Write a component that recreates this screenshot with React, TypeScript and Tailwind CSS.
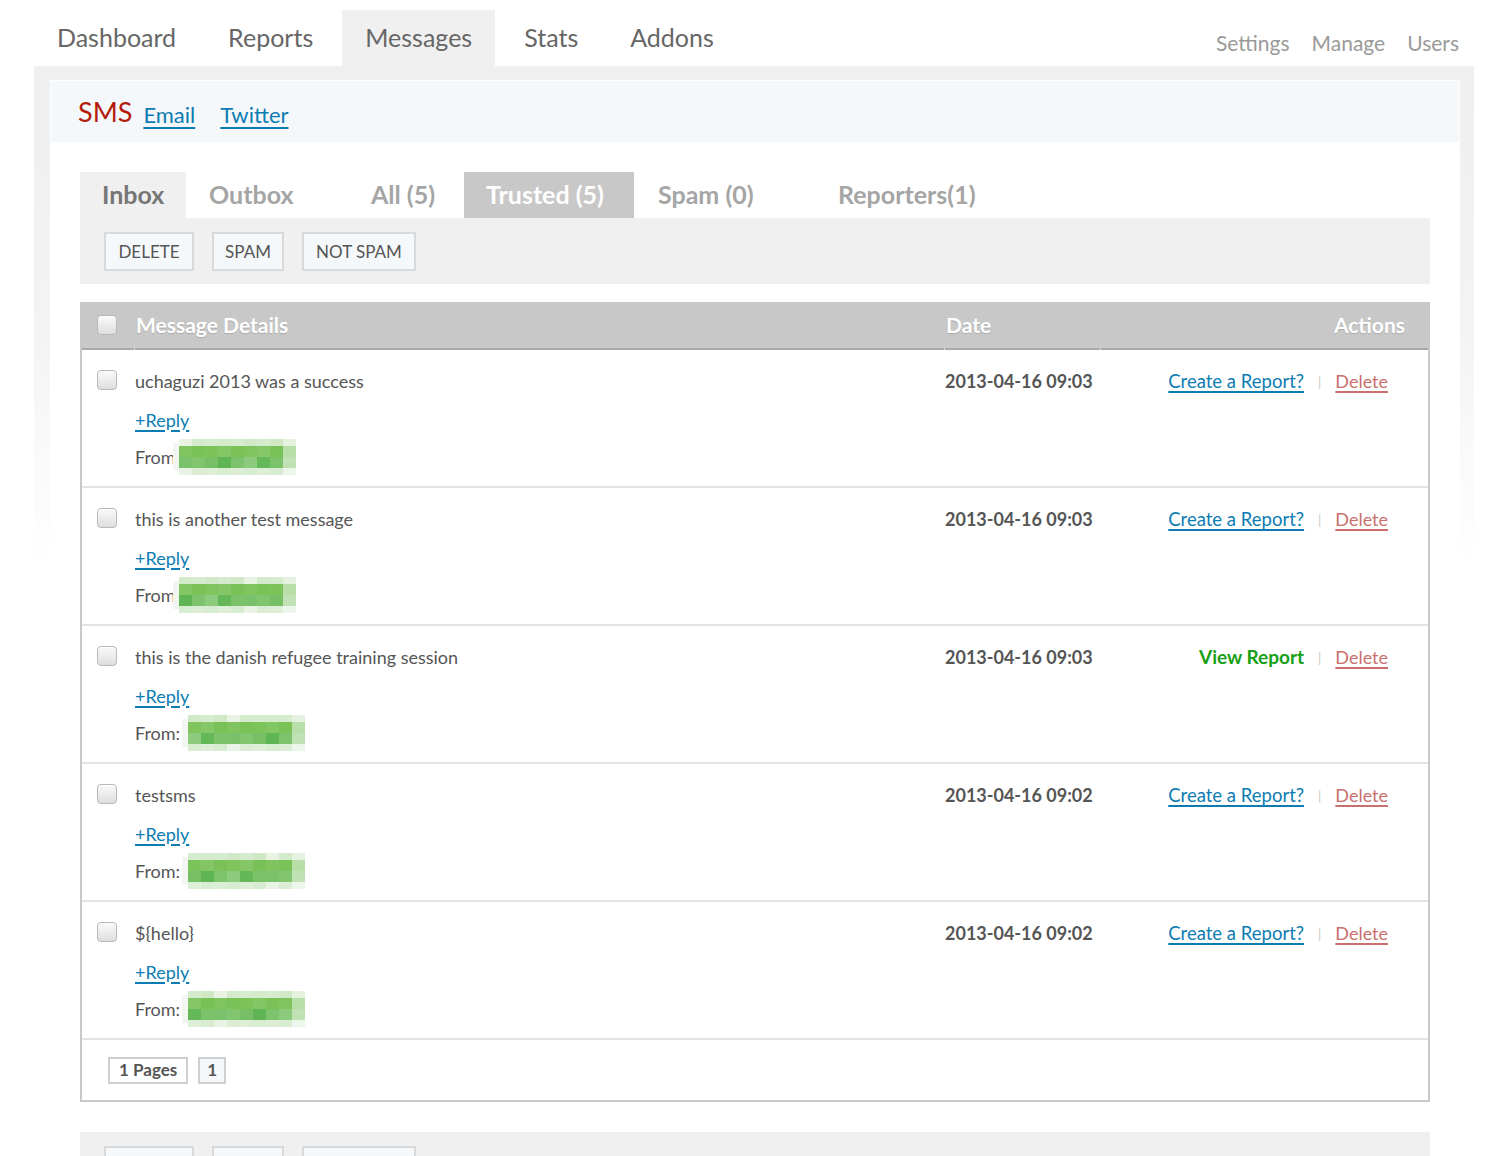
import React from "react";

const F = { fontFamily: "Lato, 'Open Sans', sans-serif" } as React.CSSProperties;

function Checkbox() {
  return (
    <div className="w-[20px] h-[20px] rounded-[4px] border border-[#b8b8b8] bg-[linear-gradient(to_bottom,#fafafa,#dedede)] shadow-[inset_0_1px_0_#fff]" />
  );
}

const greens = [
  ["#e9f3e4", "#d4ebcb", "#d6ecce", "#d3eacb", "#d6ecce", "#d2e9c9", "#d5ebcd", "#d0e8c6", "#e5f2df"],
  ["#7fc45f", "#79c257", "#7cc35a", "#83c764", "#7ac258", "#7fc45d", "#85c766", "#78c156", "#b9dfa8"],
  ["#79c16a", "#81c56f", "#76bf65", "#5fb553", "#7dc36d", "#8ccb7d", "#64b857", "#7cc26b", "#c0e1b3"],
  ["#eaf4e6", "#dbeed5", "#deefd8", "#d9edd2", "#dcefd6", "#d8ecd1", "#ddefd7", "#d7ecd0", "#edf6ea"],
];

function Blur({ seed }: { seed: number }) {
  const cw = 13;
  const rh = [7, 11, 11, 7];
  let y = 0;
  const rects: React.ReactNode[] = [];
  greens.forEach((row, ri) => {
    row.forEach((c, ci) => {
      const alt = greens[ri][(ci + seed) % 8];
      rects.push(<rect key={ri + "-" + ci} x={6 + ci * cw} y={y} width={cw} height={rh[ri]} fill={ci === 8 ? c : alt} />);
    });
    y += rh[ri];
  });
  return (
    <svg width="130" height="36" viewBox="0 0 130 36" className="block">
      <rect x="0" y="4" width="6" height="28" fill="#f2f6f0" />
      {rects}
    </svg>
  );
}

type Msg = { text: string; date: string; view?: boolean; colon: boolean; seed: number };
const msgs: Msg[] = [
  { text: "uchaguzi 2013 was a success", date: "2013-04-16 09:03", colon: false, seed: 0 },
  { text: "this is another test message", date: "2013-04-16 09:03", colon: false, seed: 3 },
  { text: "this is the danish refugee training session", date: "2013-04-16 09:03", view: true, colon: true, seed: 5 },
  { text: "testsms", date: "2013-04-16 09:02", colon: true, seed: 2 },
  { text: "${hello}", date: "2013-04-16 09:02", colon: true, seed: 6 },
];

function Toolbar({ labels }: { labels: boolean }) {
  return (
    <div className="bg-[#f0f0f0] h-[66px] flex items-start pt-[14px] pl-[24px] gap-[18px]">
      {["DELETE", "SPAM", "NOT SPAM"].map((b, i) => (
        <div
          key={b}
          className={
            "h-[39px] flex items-center justify-center border-2 border-[#d9d9d9] bg-[#f5f8fa] text-[17px] text-[#555] " +
            (i === 0 ? "w-[90px]" : i === 1 ? "w-[72px]" : "w-[114px]")
          }
        >
          {labels ? b : null}
        </div>
      ))}
    </div>
  );
}

export default function App() {
  return (
    <div className="w-[1502px] h-[1156px] bg-white overflow-hidden" style={F}>
      {/* top nav */}
      <div className="flex items-end justify-between pl-[34px] pr-[43px] pt-[10px]">
        <div className="flex gap-[6px]">
          {["Dashboard", "Reports", "Messages", "Stats", "Addons"].map((t) => (
            <div
              key={t}
              className={
                "h-[56px] px-[23px] flex items-center text-[25px] text-[#666] " +
                (t === "Messages" ? "bg-[#f0f0f0]" : "")
              }
            >
              {t}
            </div>
          ))}
        </div>
        <div className="flex gap-[22px] text-[21px] text-[#9a9a9a] pb-[8px]">
          <span>Settings</span>
          <span>Manage</span>
          <span>Users</span>
        </div>
      </div>

      {/* outer container */}
      <div className="mx-[34px] w-[1440px] pl-[16px] pr-[14px] pt-[14px] bg-[linear-gradient(to_bottom,#efefef_0px,#f3f3f3_250px,#ffffff_500px)]">
        <div className="bg-white border-[1px] border-white pb-[40px]">
          <div className="h-[61px] bg-[#f5f8fa] flex items-center pl-[27px] gap-[11px] pt-[2px]">
            <span className="text-[27px] text-[#b31c0c]">SMS</span>
            <span className="text-[22px] text-[#0c7cb2] underline underline-offset-[4px] decoration-2 mt-[4px]">Email</span>
            <span className="text-[22px] text-[#0c7cb2] underline underline-offset-[4px] decoration-2 mt-[4px] ml-[14px]">Twitter</span>
          </div>

          <div className="px-[29px] pt-[30px]">
            {/* sub tabs */}
            <div className="flex h-[46px] text-[25px] font-bold">
              <div className="w-[106px] bg-[#f0f0f0] pl-[22px] flex items-center text-[#777]">Inbox</div>
              <div className="w-[162px] pl-[23px] flex items-center text-[#a5a5a5]">Outbox</div>
              <div className="w-[116px] pl-[23px] flex items-center text-[#a5a5a5]">All (5)</div>
              <div className="w-[170px] bg-[#c8c8c8] pl-[22px] flex items-center text-white">Trusted (5)</div>
              <div className="w-[181px] pl-[24px] flex items-center text-[#a5a5a5]">Spam (0)</div>
              <div className="pl-[23px] flex items-center text-[#a5a5a5]">Reporters(1)</div>
            </div>
            <Toolbar labels />

            {/* table */}
            <div className="mt-[18px] border-x-2 border-b-2 border-[#c8c8c8]">
              <div className="bg-[#c8c8c8] h-[46px] grid grid-cols-[52px_810px_156px_1fr] items-center text-[21px] font-bold text-white [text-shadow:0_1px_1px_rgba(0,0,0,0.15)]">
                <div className="pl-[15px]">
                  <Checkbox />
                </div>
                <div className="pl-[2px]">Message Details</div>
                <div className="pl-[2px]">Date</div>
                <div className="text-right pr-[23px]">Actions</div>
              </div>
              <div className="grid grid-cols-[52px_810px_156px_1fr] h-[2px] bg-[#a9a9a9]">
                <div />
                <div className="border-l border-[#dcdcdc]" />
                <div className="border-l border-[#dcdcdc]" />
                <div className="border-l border-[#dcdcdc]" />
              </div>

              {msgs.map((m, i) => (
                <div key={i} className={"grid grid-cols-[52px_810px_156px_1fr] " + (i > 0 ? "h-[138px] border-t-2 border-[#e3e3e3]" : "h-[136px]")}>
                  <div className="pl-[15px] pt-[20px]">
                    <Checkbox />
                  </div>
                  <div className="pl-[1px] pt-[19px] text-[18px] text-[#555]">
                    <div className="h-[24px] flex items-center">{m.text}</div>
                    <div className="mt-[15px] h-[24px] flex items-center">
                      <span className="text-[#0c7cb2] underline underline-offset-[3px] decoration-[1.5px]">+Reply</span>
                    </div>
                    <div className="mt-[13px] h-[24px] flex items-center">
                      <span>{m.colon ? "From:" : "From"}</span>
                      <span className={m.colon ? "ml-[2px]" : "-ml-[3px]"}>
                        <Blur seed={m.seed} />
                      </span>
                    </div>
                  </div>
                  <div className="pl-[1px] pt-[19px] text-[18px] leading-[24px] font-bold text-[#555]">{m.date}</div>
                  <div className="pt-[19px] pr-[40px] flex justify-end items-center h-[43px] text-[18px] leading-[24px]">
                    {m.view ? (
                      <span className="text-[#16a016] font-bold text-[19px]">View Report</span>
                    ) : (
                      <span className="text-[#0c7cb2] text-[18.5px] underline underline-offset-[3px] decoration-[1.5px]">Create a Report?</span>
                    )}
                    <span className="text-[#c8c8c8] text-[13px] mx-[14px] mt-[2px]">|</span>
                    <span className="text-[#c9706e] underline underline-offset-[3px] decoration-[1.5px]">Delete</span>
                  </div>
                </div>
              ))}

              <div className="border-t-2 border-[#e3e3e3] h-[62px] flex items-center pl-[26px] gap-[10px] text-[17px] font-bold text-[#555]">
                <div className="h-[27px] px-[9px] border-2 border-[#cfcfcf] flex items-center">1 Pages</div>
                <div className="h-[27px] w-[28px] border-2 border-[#cfcfcf] bg-[#f5f8fa] flex items-center justify-center">1</div>
              </div>
            </div>

            <div className="mt-[30px]">
              <Toolbar labels={false} />
            </div>
          </div>
        </div>
      </div>
    </div>
  );
}
